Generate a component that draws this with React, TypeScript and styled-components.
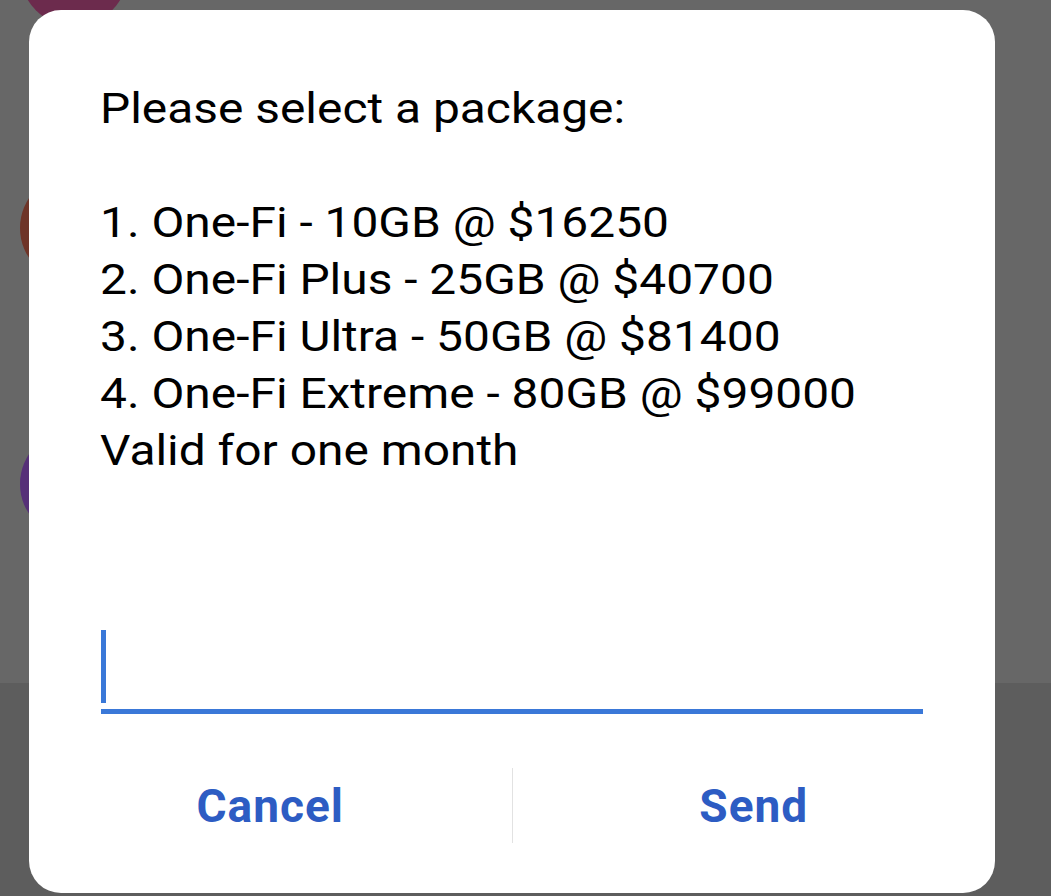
import React from 'react';
import styled, { createGlobalStyle } from 'styled-components';

const GlobalStyle = createGlobalStyle`
  html, body {
    margin: 0;
    padding: 0;
    height: 100%;
    overflow: hidden;
  }
  body {
    background: #676767;
    font-family: Roboto, "Noto Sans", Arial, sans-serif;
  }
`;

const Screen = styled.div`
  position: relative;
  width: 1051px;
  height: 896px;
  overflow: hidden;
  display: flex;
  flex-direction: column;
  background: #676767;
`;

const ChatList = styled.div`
  flex: 1;
  min-height: 0;
  overflow: hidden;
  display: flex;
  flex-direction: column;
`;

const ChatRow = styled.div`
  height: 256px;
  flex-shrink: 0;
  display: flex;
  align-items: center;
  padding-left: 20px;

  &:first-child {
    margin-top: -156px;
  }
`;

const Avatar = styled.div<{ color: string }>`
  width: 108px;
  height: 108px;
  border-radius: 50%;
  background: ${p => p.color};
`;

const BottomBar = styled.div`
  height: 213px;
  flex-shrink: 0;
  background: #5d5d5d;
`;

const Dialog = styled.div`
  position: absolute;
  left: 29px;
  top: 10px;
  width: 966px;
  height: 883px;
  box-sizing: border-box;
  background: #ffffff;
  border-radius: 32px;
  padding-top: 70px;
  display: flex;
  flex-direction: column;
`;

const Message = styled.div`
  padding: 0 72px 0 71px;
  font-size: 42px;
  line-height: 57px;
  color: #000000;
  white-space: pre-line;
  transform: scaleX(1.14);
  transform-origin: 71px 0;
`;

const InputField = styled.div`
  margin: 151px 72px 0 72px;
  height: 79px;
  border-bottom: 5px solid #3a78d8;
`;

const Caret = styled.div`
  width: 5px;
  height: 73px;
  background: #3a78d8;
`;

const ButtonRow = styled.div`
  margin-top: 54px;
  height: 75px;
  display: flex;
  align-items: stretch;
`;

const DialogButton = styled.button`
  flex: 1;
  border: none;
  background: transparent;
  padding: 0;
  font-family: Roboto, "Noto Sans", Arial, sans-serif;
  font-weight: 700;
  font-size: 46px;
  letter-spacing: 1px;
  color: #2d5cc3;
  cursor: pointer;
`;

const Divider = styled.div`
  width: 1px;
  background: #e2e2e2;
`;

const message = `Please select a package:

1. One-Fi - 10GB @ $16250
2. One-Fi Plus - 25GB @ $40700
3. One-Fi Ultra - 50GB @ $81400
4. One-Fi Extreme - 80GB @ $99000
Valid for one month`;

const avatars = ['#6c2b4d', '#6e3428', '#563078'];

export default function App() {
  return (
    <>
      <GlobalStyle />
      <Screen>
        <ChatList>
          {avatars.map((c, i) => (
            <ChatRow key={i}>
              <Avatar color={c} />
            </ChatRow>
          ))}
        </ChatList>
        <BottomBar />
        <Dialog>
          <Message>{message}</Message>
          <InputField>
            <Caret />
          </InputField>
          <ButtonRow>
            <DialogButton>Cancel</DialogButton>
            <Divider />
            <DialogButton>Send</DialogButton>
          </ButtonRow>
        </Dialog>
      </Screen>
    </>
  );
}
